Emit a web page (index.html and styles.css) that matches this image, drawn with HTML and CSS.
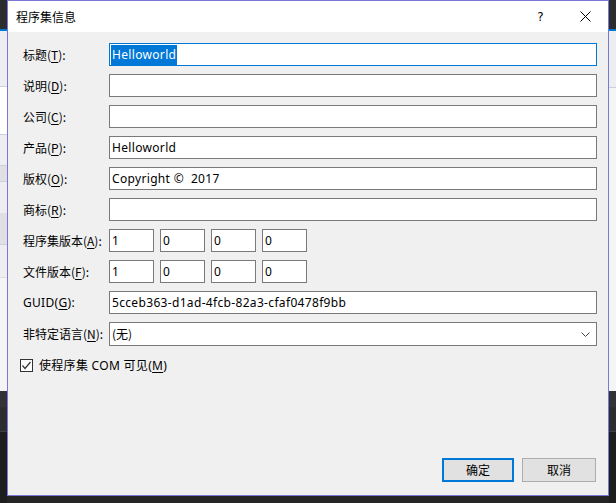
FILE: index.html
```html
<!DOCTYPE html>
<html lang="zh-CN">
<head>
<meta charset="utf-8">
<title>程序集信息</title>
<link rel="stylesheet" href="styles.css">
</head>
<body>
<div class="desk">
  <div class="strip">
    <div class="s-dark" style="height:31px"></div>
    <div class="s-blue" style="height:2px"></div>
    <div class="s-light" style="height:58px"></div>
    <div class="s-line" style="height:1px"></div>
    <div class="s-white" style="height:50px"></div>
    <div class="s-line" style="height:1px"></div>
    <div class="s-light" style="height:32px"></div>
    <div class="s-line" style="height:1px"></div>
    <div class="s-gray" style="height:15px"></div>
    <div class="s-line" style="height:1px"></div>
    <div class="s-light" style="height:33px"></div>
    <div class="s-gray" style="height:33px"></div>
    <div class="s-line" style="height:1px"></div>
    <div class="s-light" style="height:34px"></div>
    <div class="s-line2" style="height:1px"></div>
    <div class="s-pale" style="height:119px"></div>
    <div class="s-mid" style="height:17px"></div>
    <div class="s-dark" style="height:26px"></div>
    <div class="s-line3" style="height:1px"></div>
    <div class="s-deep" style="height:75px"></div>
  </div>

  <div class="dialog">
    <div class="titlebar">
      <span class="title">程序集信息</span>
      <div class="tb-buttons">
        <span class="tb-btn tb-help">?</span>
        <span class="tb-btn">
          <svg width="11" height="11" viewBox="0 0 11 11"><path d="M0.5 0.5 L10.5 10.5 M10.5 0.5 L0.5 10.5" stroke="#000" stroke-width="1" fill="none"/></svg>
        </span>
      </div>
    </div>

    <div class="body">
      <div class="form">
        <label class="lbl">标题(<u>T</u>):</label>
        <div class="field focused"><span class="sel">Helloworld</span></div>

        <label class="lbl">说明(<u>D</u>):</label>
        <div class="field"></div>

        <label class="lbl">公司(<u>C</u>):</label>
        <div class="field"></div>

        <label class="lbl">产品(<u>P</u>):</label>
        <div class="field">Helloworld</div>

        <label class="lbl">版权(<u>O</u>):</label>
        <div class="field">Copyright ©&nbsp; 2017</div>

        <label class="lbl">商标(<u>R</u>):</label>
        <div class="field"></div>

        <label class="lbl">程序集版本(<u>A</u>):</label>
        <div class="ver">
          <div class="field small">1</div>
          <div class="field small">0</div>
          <div class="field small">0</div>
          <div class="field small">0</div>
        </div>

        <label class="lbl">文件版本(<u>F</u>):</label>
        <div class="ver">
          <div class="field small">1</div>
          <div class="field small">0</div>
          <div class="field small">0</div>
          <div class="field small">0</div>
        </div>

        <label class="lbl lbl-latin">GUID(<u>G</u>):</label>
        <div class="field">5cceb363-d1ad-4fcb-82a3-cfaf0478f9bb</div>

        <label class="lbl">非特定语言(<u>N</u>):</label>
        <div class="field combo">
          <span>(无)</span>
          <svg class="chev" width="9" height="5" viewBox="0 0 9 5"><path d="M0.5 0.5 L4.5 4.5 L8.5 0.5" stroke="#444" stroke-width="1" fill="none"/></svg>
        </div>
      </div>

      <div class="check-row">
        <span class="checkbox">
          <svg width="11" height="11" viewBox="0 0 11 11"><path d="M1.5 5.5 L4 8.5 L9.5 2" stroke="#333" stroke-width="1.2" fill="none"/></svg>
        </span>
        <span class="check-label">使程序集 COM 可见(<u>M</u>)</span>
      </div>

      <div class="footer">
        <button class="btn btn-ok">确定</button>
        <button class="btn btn-cancel">取消</button>
      </div>
    </div>
  </div>

  <div class="strip">
    <div class="s-dark" style="height:31px"></div>
    <div class="s-blue" style="height:2px"></div>
    <div class="s-light" style="height:59px"></div>
    <div class="s-line" style="height:1px"></div>
    <div class="s-pale" style="height:320px"></div>
    <div class="s-mid" style="height:17px"></div>
    <div class="s-dark" style="height:26px"></div>
    <div class="s-line3" style="height:1px"></div>
    <div class="s-deep" style="height:75px"></div>
  </div>
</div>
</body>
</html>
```

FILE: styles.css
```css
html, body {
  margin: 0;
  padding: 0;
}
body {
  background: #252526;
  font-family: "Noto Sans", "Noto Sans CJK SC", sans-serif;
  font-size: 12px;
  color: #000;
  width: 616px;
  height: 503px;
  overflow: hidden;
}
.desk {
  display: flex;
  height: 503px;
}
.strip {
  width: 7px;
  display: flex;
  flex-direction: column;
}
.s-dark { background: #2d2d30; }
.s-blue { background: #007acc; }
.s-light { background: #eeeef2; }
.s-line { background: #cccedb; }
.s-line2 { background: #dddddd; }
.s-white { background: #ffffff; }
.s-gray { background: #e0e0e4; }
.s-pale { background: #f5f5f5; }
.s-mid { background: #333337; }
.s-line3 { background: #3f3f46; }
.s-deep { background: #1e1e1e; }

.dialog {
  width: 602px;
  height: 496px;
  box-sizing: border-box;
  border: 1px solid #7a78d6;
  background: #f0f0f0;
  display: flex;
  flex-direction: column;
}
.titlebar {
  height: 31px;
  background: #fff;
  display: flex;
  align-items: center;
  justify-content: space-between;
  flex-shrink: 0;
}
.title {
  padding-left: 8px;
  font-family: "Noto Sans CJK SC", sans-serif;
  font-size: 12px;
  line-height: 16px;
}
.tb-buttons {
  display: flex;
  height: 31px;
}
.tb-btn {
  width: 45px;
  height: 31px;
  display: flex;
  align-items: center;
  justify-content: center;
}
.tb-help {
  font-family: "DejaVu Sans", sans-serif;
  font-size: 12px;
  line-height: 12px;
}
.body {
  flex: 1;
  display: flex;
  flex-direction: column;
}
.form {
  display: grid;
  grid-template-columns: 86px 1fr;
  row-gap: 8px;
  align-items: center;
  padding: 11px 11px 0 15px;
}
.lbl {
  font-family: "Noto Sans CJK SC", sans-serif;
  line-height: 16px;
  white-space: nowrap;
}
.lbl-latin {
  font-family: "Noto Sans", "Noto Sans CJK SC", sans-serif;
  letter-spacing: 0.3px;
}
.lbl u, .check-label u {
  text-underline-offset: 2px;
}
.field {
  height: 23px;
  box-sizing: border-box;
  border: 1px solid #7a7a7a;
  background: #fff;
  padding: 0 2px;
  line-height: 21px;
  white-space: nowrap;
  overflow: hidden;
  letter-spacing: 0.33px;
}
.field.focused {
  border-color: #0078d7;
  padding-left: 1px;
}
.sel {
  display: inline-block;
  background: #0078d7;
  color: #fff;
  line-height: 20px;
  padding: 0 1px;
}
.ver {
  display: flex;
  gap: 6px;
}
.field.small {
  width: 45px;
}
.combo {
  height: 24px;
  line-height: 22px;
  display: flex;
  justify-content: space-between;
  align-items: center;
  font-family: "Noto Sans CJK SC", sans-serif;
  letter-spacing: 0;
}
.chev {
  margin-right: 4px;
}
.check-row {
  display: flex;
  align-items: center;
  margin: 13px 0 0 12px;
  height: 13px;
}
.checkbox {
  width: 13px;
  height: 13px;
  box-sizing: border-box;
  border: 1px solid #333;
  background: #fff;
  display: flex;
  align-items: center;
  justify-content: center;
}
.check-label {
  margin-left: 6px;
  font-family: "Noto Sans", "Noto Sans CJK SC", sans-serif;
  line-height: 16px;
  letter-spacing: 0.3px;
}
.footer {
  margin-top: auto;
  display: flex;
  justify-content: flex-end;
  gap: 8px;
  padding: 0 12px 13px 0;
}
.btn {
  height: 24px;
  box-sizing: border-box;
  background: #e1e1e1;
  font-family: "Noto Sans CJK SC", sans-serif;
  font-size: 12px;
  color: #000;
  padding: 0;
  margin: 0;
  line-height: 16px;
}
.btn-ok {
  width: 72px;
  border: 2px solid #0078d7;
}
.btn-cancel {
  width: 74px;
  border: 1px solid #adadad;
}
```
